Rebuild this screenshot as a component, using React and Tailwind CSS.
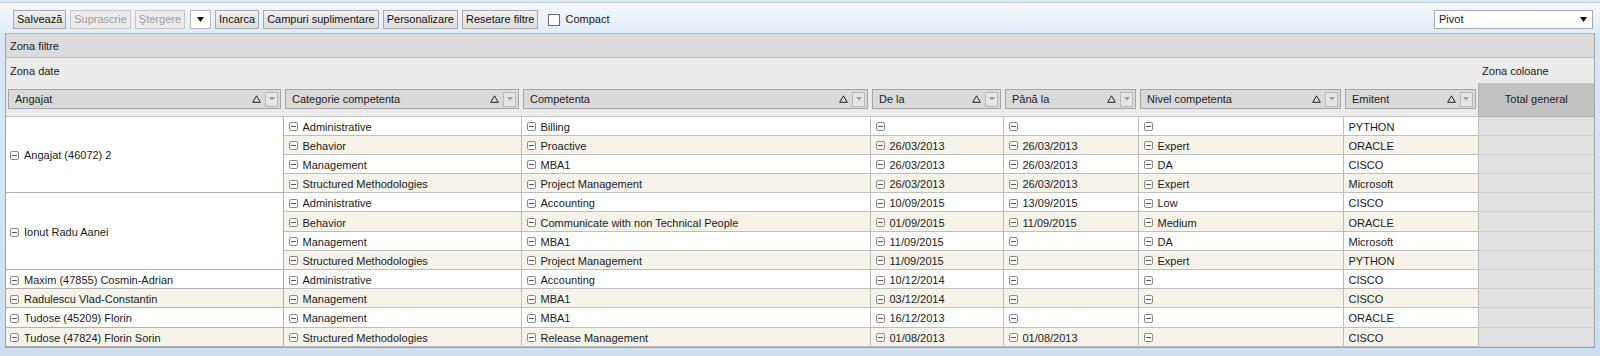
import React from 'react';

const groups = [
  {
    emp: 'Angajat (46072) 2',
    items: [
      ['Administrative', 'Billing', '', '', '', 'PYTHON'],
      ['Behavior', 'Proactive', '26/03/2013', '26/03/2013', 'Expert', 'ORACLE'],
      ['Management', 'MBA1', '26/03/2013', '26/03/2013', 'DA', 'CISCO'],
      ['Structured Methodologies', 'Project Management', '26/03/2013', '26/03/2013', 'Expert', 'Microsoft'],
    ],
  },
  {
    emp: 'Ionut Radu Aanei',
    items: [
      ['Administrative', 'Accounting', '10/09/2015', '13/09/2015', 'Low', 'CISCO'],
      ['Behavior', 'Communicate with non Technical People', '01/09/2015', '11/09/2015', 'Medium', 'ORACLE'],
      ['Management', 'MBA1', '11/09/2015', '', 'DA', 'Microsoft'],
      ['Structured Methodologies', 'Project Management', '11/09/2015', '', 'Expert', 'PYTHON'],
    ],
  },
  { emp: 'Maxim (47855) Cosmin-Adrian', items: [['Administrative', 'Accounting', '10/12/2014', '', '', 'CISCO']] },
  { emp: 'Radulescu Vlad-Constantin', items: [['Management', 'MBA1', '03/12/2014', '', '', 'CISCO']] },
  { emp: 'Tudose (45209) Florin', items: [['Management', 'MBA1', '16/12/2013', '', '', 'ORACLE']] },
  { emp: 'Tudose (47824) Florin Sorin', items: [['Structured Methodologies', 'Release Management', '01/08/2013', '01/08/2013', '', 'CISCO']] },
];

const headers = ['Angajat', 'Categorie competenta', 'Competenta', 'De la', 'Până la', 'Nivel competenta', 'Emitent'];
const widths = [277, 238, 349, 133, 135, 205, 135, 116];

function Minus() {
  return (
    <span className="inline-flex items-center justify-center w-[9px] h-[9px] border border-[#8a8a8a] rounded-[2px] bg-white mr-[5px] shrink-0">
      <span className="block w-[5px] h-px bg-[#555]" />
    </span>
  );
}

function Btn({ children, disabled }) {
  return (
    <button
      className={
        'h-[19px] px-[3px] border text-[11px] leading-[17px] ' +
        (disabled
          ? 'border-[#c6c6c6] bg-[#ececec] text-[#9c9c9c]'
          : 'border-[#a9a9a9] bg-gradient-to-b from-[#f0f0f0] to-[#dedede] text-[#111]')
      }
    >
      {children}
    </button>
  );
}

function HeaderBox({ label }) {
  return (
    <div className="mx-[2px] h-[20px] flex items-center border border-[#a6a6a6] bg-[#dadada] pl-[6px] pr-[2px] text-[11px] text-[#222]">
      <span className="flex-1 truncate">{label}</span>
      <svg width="9" height="8" viewBox="0 0 9 8" className="mr-[4px]">
        <path d="M4.5 0.8 L8.3 7.3 L0.7 7.3 Z" fill="none" stroke="#222" strokeWidth="1" />
      </svg>
      <span className="w-[13px] h-[15px] border border-[#b9b9b9] bg-[#e6e6e6] flex items-center justify-center">
        <svg width="6" height="4" viewBox="0 0 6 4">
          <path d="M0 0 L6 0 L3 3.5 Z" fill="#a0a0a0" />
        </svg>
      </span>
    </div>
  );
}

function Cell({ value, icon = true, bg }) {
  return (
    <td className={'h-[19.2px] p-0 pl-[5px] pt-[2px] leading-[14px] border-r border-b border-[#bdbdbd] align-middle ' + bg}>
      <div className="flex items-center whitespace-nowrap overflow-hidden">
        {icon && <Minus />}
        <span>{value}</span>
      </div>
    </td>
  );
}

export default function App() {
  let idx = 0;
  return (
    <div
      className="w-[1600px] h-[356px] overflow-hidden bg-gradient-to-b from-[#dfe9f5] to-[#cddff1] text-[11px] text-[#1a1a1a]"
      style={{ fontFamily: '"Liberation Sans", Arial, sans-serif' }}
    >
      <div className="h-[2px]" />
      <div className="h-[31px] border-t border-[#c3c9d1] bg-gradient-to-b from-[#f3f7fb] to-[#e2ecf7] flex items-start pt-[7px] pl-[13px] pr-[7px]">
        <div className="flex items-center gap-[4px]">
          <Btn>Salvează</Btn>
          <Btn disabled>Suprascrie</Btn>
          <Btn disabled>Ştergere</Btn>
          <div className="w-[21px] h-[19px] ml-[1px] bg-white border border-[#b5b5b5] flex items-center justify-center">
            <svg width="7" height="5" viewBox="0 0 7 5"><path d="M0 0 L7 0 L3.5 5 Z" fill="#111" /></svg>
          </div>
          <Btn>Incarca</Btn>
          <Btn>Campuri suplimentare</Btn>
          <Btn>Personalizare</Btn>
          <Btn>Resetare filtre</Btn>
          <span className="ml-[6px] w-[12px] h-[12px] border border-[#6f6f6f] bg-white" />
          <span className="ml-[1px]">Compact</span>
        </div>
        <div className="ml-auto w-[159px] h-[19px] bg-white border border-[#a9a9a9] flex items-center pl-[4px] pr-[5px]">
          <span className="flex-1">Pivot</span>
          <svg width="7" height="5" viewBox="0 0 7 5"><path d="M0 0 L7 0 L3.5 5 Z" fill="#111" /></svg>
        </div>
      </div>

      <div className="mx-[5px] border-x border-b border-[#a3a3a3]">
        <div className="h-[25px] bg-[#dcdcdc] border-y border-[#bcbcbc] flex items-center pl-[4px] pt-[2px]">Zona filtre</div>

        <table className="table-fixed border-collapse w-[1588px]">
          <colgroup>
            {widths.map((w, i) => (
              <col key={i} style={{ width: w }} />
            ))}
          </colgroup>
          <thead>
            <tr className="h-[25px] bg-[#ebebeb]">
              <td colSpan={7} className="p-0 pl-[4px] pt-[2px] align-middle font-normal text-left">Zona date</td>
              <td className="p-0 pl-[4px] pt-[2px] align-middle">Zona coloane</td>
            </tr>
            <tr className="h-[33px] bg-[#ebebeb]">
              {headers.map((h) => (
                <th key={h} className="p-0 pt-[6px] align-top font-normal text-left border-b border-[#c4c4c4]">
                  <HeaderBox label={h} />
                </th>
              ))}
              <th className="p-0 bg-[#c2c2c2] font-normal text-[#222] text-center border-l border-b border-[#b0b0b0]">
                Total general
              </th>
            </tr>
          </thead>
          <tbody>
            {groups.map((g) =>
              g.items.map((it, j) => {
                const i = idx++;
                const bg = i % 2 === 0 ? 'bg-white' : 'bg-[#f6f3eb]';
                const empBg = g.items.length > 1 ? 'bg-white' : bg;
                return (
                  <tr key={i} className="h-[19.2px]">
                    {j === 0 && (
                      <td
                        rowSpan={g.items.length}
                        className={'p-0 pl-[4px] pt-[2px] leading-[14px] border-r border-b border-[#b0b0b0] align-middle ' + empBg}
                      >
                        <div className="flex items-center whitespace-nowrap">
                          <Minus />
                          <span>{g.emp}</span>
                        </div>
                      </td>
                    )}
                    <Cell value={it[0]} bg={bg} />
                    <Cell value={it[1]} bg={bg} />
                    <Cell value={it[2]} bg={bg} />
                    <Cell value={it[3]} bg={bg} />
                    <Cell value={it[4]} bg={bg} />
                    <Cell value={it[5]} icon={false} bg={bg} />
                    <td className="p-0 bg-[#e1e1e1] border-b border-[#d2d2d2]" />
                  </tr>
                );
              })
            )}
          </tbody>
        </table>
      </div>
    </div>
  );
}
